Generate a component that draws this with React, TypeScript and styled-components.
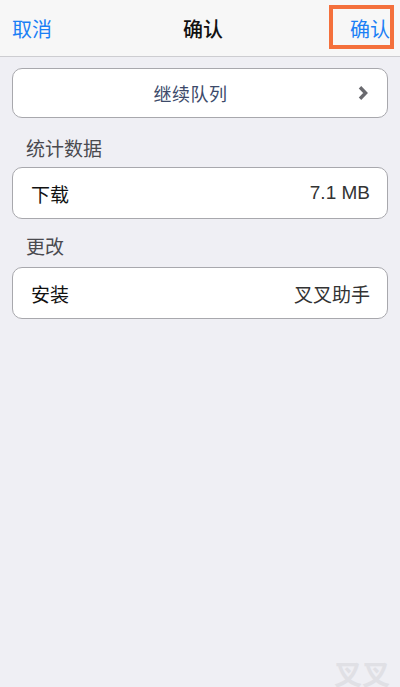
import React from "react";
import styled, { createGlobalStyle } from "styled-components";

const Global = createGlobalStyle`
  html, body { margin: 0; padding: 0; }
  body {
    background: #efeff4;
    font-family: "Liberation Sans", "Noto Sans CJK SC", "Noto Sans", sans-serif;
    -webkit-font-smoothing: antialiased;
  }
  * { box-sizing: border-box; }
`;

const Screen = styled.div`
  position: relative;
  width: 400px;
  height: 687px;
  overflow: hidden;
  background: #efeff4;
`;

const NavBar = styled.header`
  height: 57px;
  background: #f7f7f7;
  border-bottom: 1px solid #cdcdd1;
  display: grid;
  grid-template-columns: 1fr auto 1fr;
  align-items: center;
  padding: 4px 6px 0 12px;
`;

const NavButton = styled.button<{ $align?: "left" | "right" }>`
  justify-self: ${(p) => (p.$align === "right" ? "end" : "start")};
  background: none;
  border: none;
  padding: 0;
  font: inherit;
  font-size: 20px;
  line-height: 24px;
  color: #1b7ff5;
  cursor: pointer;
`;

const HighlightButton = styled(NavButton)`
  align-self: start;
  margin-top: 1px;
  border: 4px solid #f4703c;
  height: 44px;
  padding: 6px 0 0 17px;
  display: flex;
  align-items: center;
`;

const Title = styled.h1`
  margin: 0;
  font-size: 20px;
  line-height: 24px;
  font-weight: 500;
  color: #111;
`;

const Content = styled.main`
  padding: 11px 12px 0;
`;

const Card = styled.div`
  background: #fff;
  border: 1px solid #a8a8ad;
  border-radius: 10px;
`;

const ActionCard = styled(Card).attrs({ as: "button" })`
  width: 100%;
  height: 50px;
  display: grid;
  grid-template-columns: 1fr auto;
  align-items: center;
  padding: 0 19px 0 0;
  font: inherit;
  cursor: pointer;
`;

const ActionLabel = styled.span`
  grid-column: 1 / 3;
  grid-row: 1;
  text-align: center;
  font-size: 18px;
  color: #3c4a6a;
  letter-spacing: 0.5px;
`;

const Chevron = styled.svg`
  grid-column: 2;
  grid-row: 1;
  display: block;
  width: 10px;
  height: 16px;
`;

const SectionHeader = styled.div<{ $top: number; $bottom: number }>`
  padding: ${(p) => p.$top}px 14px ${(p) => p.$bottom}px;
  font-size: 19px;
  line-height: 24px;
  color: #4a4a4f;
`;

const Row = styled.div`
  height: 50px;
  display: flex;
  align-items: center;
  justify-content: space-between;
  padding: 0 17px 0 18px;
  font-size: 19px;
  color: #111;
`;

const Value = styled.span`
  color: #333;
`;

const Watermark = styled.div`
  position: absolute;
  right: 10px;
  bottom: -6px;
  font-family: "Noto Sans CJK SC", sans-serif;
  font-size: 28px;
  font-weight: 700;
  color: #e0e0e5;
`;

export default function App() {
  return (
    <>
      <Global />
      <Screen>
        <NavBar>
          <NavButton $align="left">取消</NavButton>
          <Title>确认</Title>
          <HighlightButton $align="right">确认</HighlightButton>
        </NavBar>
        <Content>
          <ActionCard>
            <ActionLabel>继续队列</ActionLabel>
            <Chevron viewBox="0 0 10 16">
              <path d="M2 2.2 L7.6 8 L2 13.8" fill="none" stroke="#6a6a6f" strokeWidth="3.4" strokeLinejoin="miter" />
            </Chevron>
          </ActionCard>
          <SectionHeader $top={20} $bottom={5}>统计数据</SectionHeader>
          <Card>
            <Row>
              <span>下载</span>
              <Value>7.1 MB</Value>
            </Row>
          </Card>
          <SectionHeader $top={17} $bottom={7}>更改</SectionHeader>
          <Card>
            <Row>
              <span>安装</span>
              <Value>叉叉助手</Value>
            </Row>
          </Card>
        </Content>
        <Watermark>叉叉</Watermark>
      </Screen>
    </>
  );
}
